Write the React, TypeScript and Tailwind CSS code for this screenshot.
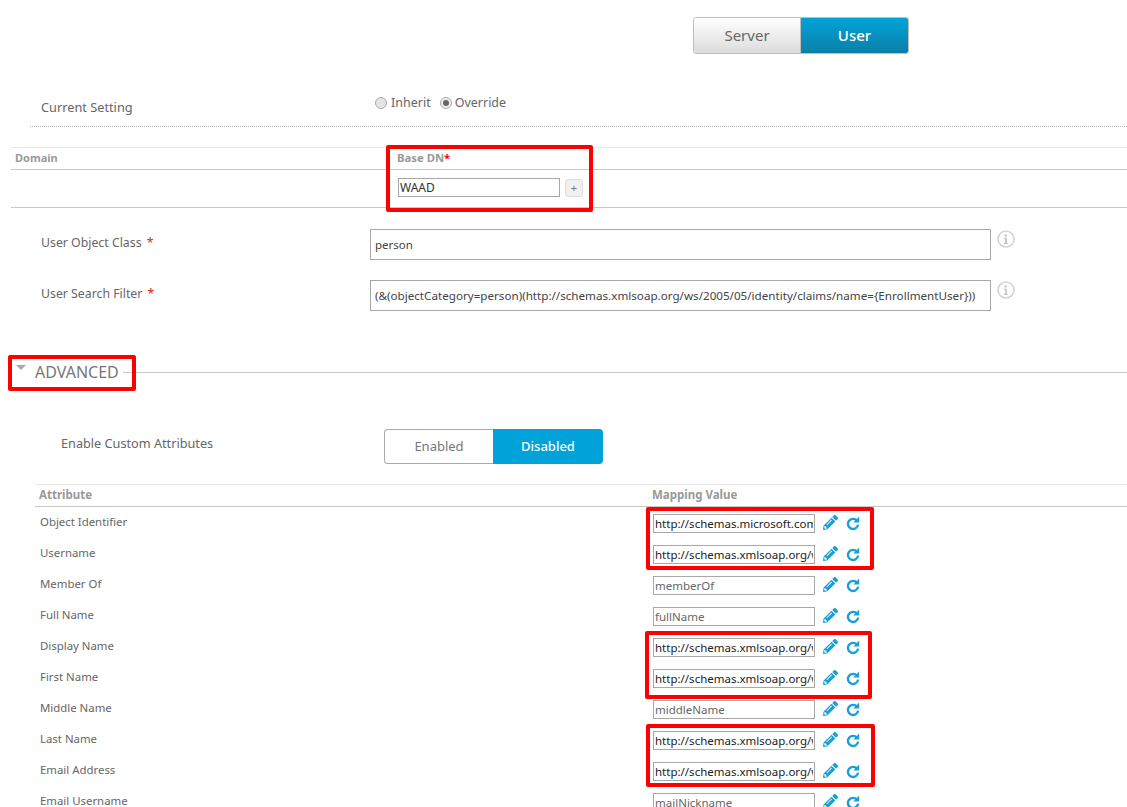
import { FaPencilAlt } from "react-icons/fa";

const font = { fontFamily: '"Noto Sans", "Open Sans", sans-serif' };

const rows: [string, string, boolean][] = [
  ["Object Identifier", "http://schemas.microsoft.com/identity/claims/objectidentifier", true],
  ["Username", "http://schemas.xmlsoap.org/ws/2005/05/identity/claims/name", true],
  ["Member Of", "memberOf", false],
  ["Full Name", "fullName", false],
  ["Display Name", "http://schemas.xmlsoap.org/ws/2005/05/identity/claims/displayname", true],
  ["First Name", "http://schemas.xmlsoap.org/ws/2005/05/identity/claims/givenname", true],
  ["Middle Name", "middleName", false],
  ["Last Name", "http://schemas.xmlsoap.org/ws/2005/05/identity/claims/surname", true],
  ["Email Address", "http://schemas.xmlsoap.org/ws/2005/05/identity/claims/emailaddress", true],
  ["Email Username", "mailNickname", false],
];

function Info() {
  return (
    <svg width="20" height="20" viewBox="0 0 20 20" className="ml-[5px] shrink-0">
      <circle cx="10" cy="10" r="8" fill="none" stroke="#d4d4d4" strokeWidth="1.6" />
      <path d="M8.6 5.6h2.2v2h-2.2z M8.2 8.8h2.6v5h1v1.2H8v-1.2h1V10H8.2z" fill="#c4c4c4" />
    </svg>
  );
}

function Redo() {
  return (
    <svg width="14" height="15" viewBox="0 0 14 15" className="ml-[8px] mt-[3px] shrink-0">
      <path d="M10.9 4.6A5.1 5.1 0 1 0 12.1 8.6" fill="none" stroke="#1a9fd6" strokeWidth="2.4" />
      <path d="M13.2 0.6V6.6H7.4z" fill="#1a9fd6" />
    </svg>
  );
}

function RedBox({ className }: { className: string }) {
  return <div className={`absolute border-[4px] border-[#ff0000] rounded-[2px] pointer-events-none ${className}`} />;
}

export default function App() {
  return (
    <div style={font} className="relative w-[1127px] h-[807px] overflow-hidden bg-white text-[#555]">
      <div className="h-[70px] pt-[17px] pl-[693px]">
        <div className="flex w-[216px] h-[37px] rounded-[3px] border border-[#bdbdbd] overflow-hidden text-[15px]">
          <div className="w-[107px] flex items-center justify-center bg-gradient-to-b from-white to-[#dcdcdc] text-[#666] border-r border-[#bdbdbd]">
            Server
          </div>
          <div className="flex-1 flex items-center justify-center bg-gradient-to-b from-[#00a3d9] to-[#0a7fa8] text-white font-medium">
            User
          </div>
        </div>
      </div>

      <div className="ml-[30px] h-[57px] border-b border-dotted border-[#bbb] flex">
        <div className="w-[345px] pl-[11px] pt-[27px] text-[12.75px] leading-[20px] text-[#666]">Current Setting</div>
        <div className="pt-[23px] flex items-center h-[42px] text-[12.5px] text-[#666]">
          <span className="w-[12px] h-[12px] rounded-full border border-[#aaa] bg-[#e4e4e4]" />
          <span className="ml-[4px] mt-[1px]">Inherit</span>
          <span className="ml-[9px] w-[12px] h-[12px] rounded-full border border-[#aaa] bg-[#eee] flex items-center justify-center">
            <span className="w-[6px] h-[6px] rounded-full bg-[#666]" />
          </span>
          <span className="ml-[3px] mt-[1px]">Override</span>
        </div>
      </div>

      <div className="ml-[11px] mt-[20px]">
        <div className="h-[23px] border-t border-b border-t-[#eaeaea] border-b-[#c8c8c8] flex items-center text-[11px] font-bold text-[#999]">
          <div className="w-[386px] pl-[4px]">Domain</div>
          <div className="text-[11.3px]">
            Base DN<span className="text-[#ff0000]">*</span>
          </div>
        </div>
        <div className="h-[38px] border-b border-[#c8c8c8] flex items-start pt-[8px] pl-[387px]">
          <input
            readOnly
            value="WAAD"
            className="w-[162px] h-[19px] border border-[#a8a8a8] px-[1px] text-[12px] text-[#333] outline-none"
          />
          <div className="ml-[5px] w-[18px] h-[18px] mt-[1px] rounded-[3px] border border-[#e0dcdc] bg-[#f0f0f0] flex items-center justify-center text-[11px] text-[#777]">
            +
          </div>
        </div>
      </div>

      <div className="mt-[21px] flex items-start h-[31px]">
        <div className="w-[370px] pl-[41px] pt-[4px] text-[12.3px] leading-[20px] text-[#666]">
          User Object Class <span className="text-[#e02020] ml-[2px]">*</span>
        </div>
        <input readOnly value="person" className="w-[621px] h-[31px] border border-[#a8a8a8] px-[4px] text-[11.5px] text-[#444] outline-none" />
        <Info />
      </div>

      <div className="mt-[20px] flex items-start h-[31px]">
        <div className="w-[370px] pl-[41px] pt-[4px] text-[12.3px] leading-[20px] text-[#666]">
          User Search Filter <span className="text-[#e02020] ml-[2px]">*</span>
        </div>
        <input
          readOnly
          value="(&(objectCategory=person)(http://schemas.xmlsoap.org/ws/2005/05/identity/claims/name={EnrollmentUser}))"
          className="w-[621px] h-[31px] border border-[#a8a8a8] px-[4px] text-[11.65px] text-[#444] outline-none"
        />
        <Info />
      </div>

      <div className="mt-[49px] h-[24px] flex items-center">
        <div className="ml-[16px] mt-[-10px] w-0 h-0 border-x-[5px] border-x-transparent border-t-[5px] border-t-[#aaa]" />
        <div className="ml-[9px] text-[16px] text-[#777]">ADVANCED</div>
        <div className="flex-1 h-px bg-[#c8c8c8] ml-[4px]" />
      </div>

      <div className="mt-[45px] flex items-start h-[35px]">
        <div className="w-[384px] pl-[61px] pt-[4px] text-[12.7px] leading-[20px] text-[#666]">Enable Custom Attributes</div>
        <div className="flex w-[219px] h-[35px] text-[13px]">
          <div className="w-[109px] pt-[1px] flex items-center justify-center border border-r-0 border-[#aaa] rounded-l-[4px] text-[#777]">Enabled</div>
          <div className="w-[110px] pt-[1px] flex items-center justify-center bg-[#00a3d9] rounded-r-[4px] text-white font-medium">Disabled</div>
        </div>
      </div>

      <div className="ml-[35px] mt-[20px]">
        <div className="h-[23px] pb-[1px] border-t border-b border-t-[#eaeaea] border-b-[#c8c8c8] flex items-center text-[11.5px] font-bold text-[#999]">
          <div className="w-[617px] pl-[4px]">Attribute</div>
          <div>Mapping Value</div>
        </div>
        <div className="pt-[6px]">
          {rows.map(([label, value, dark]) => (
            <div key={label} className="h-[31px] flex items-start">
              <div className="w-[618px] pl-[5px] pt-[1px] text-[11.4px] leading-[16px] text-[#666]">{label}</div>
              <input
                readOnly
                value={value}
                className={`w-[162px] h-[19px] mt-[1px] border border-[#a8a8a8] px-[1px] text-[11.5px] outline-none ${dark ? "text-[#222]" : "text-[#666]"}`}
              />
              <FaPencilAlt className="ml-[8px] mt-[2px] w-[15px] h-[15px] text-[#1a9fd6] shrink-0" />
              <Redo />
            </div>
          ))}
        </div>
      </div>

      <RedBox className="left-[386px] top-[145px] w-[207px] h-[67px]" />
      <RedBox className="left-[8px] top-[355px] w-[128px] h-[36px]" />
      <RedBox className="left-[646px] top-[507px] w-[228px] h-[63px]" />
      <RedBox className="left-[645px] top-[631px] w-[227px] h-[68px]" />
      <RedBox className="left-[646px] top-[724px] w-[229px] h-[63px]" />
    </div>
  );
}
